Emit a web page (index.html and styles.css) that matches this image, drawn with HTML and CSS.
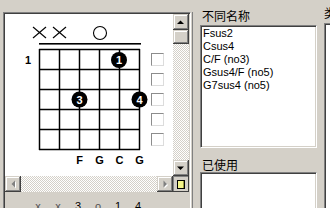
FILE: index.html
```html
<!DOCTYPE html>
<html>
<head>
<meta charset="utf-8">
<link rel="stylesheet" href="styles.css">
</head>
<body>
<div class="app">
  <div class="leftpane">
    <div class="scrollview">
      <div class="canvas">
        <svg class="chord" width="146" height="162" viewBox="0 0 146 162">
          <g stroke="#000" stroke-width="1.1" fill="none">
            <line x1="28" y1="13" x2="41" y2="24"/>
            <line x1="41" y1="13" x2="28" y2="24"/>
            <line x1="48" y1="13" x2="61" y2="24"/>
            <line x1="61" y1="13" x2="48" y2="24"/>
            <circle cx="95" cy="19" r="6.5"/>
          </g>
          <rect x="34" y="29" width="102" height="1.6" fill="#000"/>
          <g stroke="#000" stroke-width="1.5">
            <line x1="34.5" y1="35" x2="34.5" y2="136"/>
            <line x1="54.5" y1="35" x2="54.5" y2="136"/>
            <line x1="74.5" y1="35" x2="74.5" y2="136"/>
            <line x1="94.5" y1="35" x2="94.5" y2="136"/>
            <line x1="114.5" y1="35" x2="114.5" y2="136"/>
            <line x1="134.5" y1="35" x2="134.5" y2="136"/>
            <line x1="34" y1="35.5" x2="135" y2="35.5"/>
            <line x1="34" y1="55.5" x2="135" y2="55.5"/>
            <line x1="34" y1="75.5" x2="135" y2="75.5"/>
            <line x1="34" y1="95.5" x2="135" y2="95.5"/>
            <line x1="34" y1="115.5" x2="135" y2="115.5"/>
            <line x1="34" y1="135.5" x2="135" y2="135.5"/>
          </g>
          <text class="fret" x="23" y="50">1</text>
          <circle cx="114" cy="46" r="8" fill="#000"/>
          <text class="finger" x="114" y="50">1</text>
          <circle cx="74.5" cy="85.5" r="8" fill="#000"/>
          <text class="finger" x="74.5" y="89.5">3</text>
          <circle cx="134.5" cy="85.5" r="8" fill="#000"/>
          <text class="finger" x="134.5" y="89.5">4</text>
          <text class="note" x="74.5" y="150">F</text>
          <text class="note" x="94.5" y="150">G</text>
          <text class="note" x="114.5" y="150">C</text>
          <text class="note" x="134.5" y="150">G</text>
        </svg>
        <div class="checks">
          <span class="check"></span>
          <span class="check"></span>
          <span class="check"></span>
          <span class="check"></span>
          <span class="check"></span>
        </div>
      </div>
      <div class="vscroll">
        <span class="sbtn"><svg width="16" height="16"><polygon points="4,10 11,10 7.5,6.5" fill="#000"/></svg></span>
        <span class="thumb"></span>
        <span class="track"></span>
        <span class="sbtn"><svg width="16" height="16"><polygon points="4,6.5 11,6.5 7.5,10" fill="#000"/></svg></span>
      </div>
      <div class="hscroll">
        <span class="sbtn"><svg width="16" height="16"><polygon points="10,4.5 10,11.5 6.5,8" fill="#fff" transform="translate(1,1)"/><polygon points="10,4.5 10,11.5 6.5,8" fill="#808080"/></svg></span>
        <span class="track"></span>
        <span class="sbtn"><svg width="16" height="16"><polygon points="6.5,4.5 6.5,11.5 10,8" fill="#fff" transform="translate(1,1)"/><polygon points="6.5,4.5 6.5,11.5 10,8" fill="#808080"/></svg></span>
      </div>
      <div class="corner">
        <svg width="16" height="16"><rect x="4.5" y="4.5" width="7" height="8" fill="#f4f48a" stroke="#000"/><line x1="10.5" y1="5" x2="10.5" y2="12" stroke="#9a9a40"/></svg>
      </div>
    </div>
    <div class="numrow">
      <span class="num small">x</span>
      <span class="num small">x</span>
      <span class="num">3</span>
      <span class="num small">o</span>
      <span class="num">1</span>
      <span class="num">4</span>
    </div>
  </div>
  <div class="splitter"></div>
  <div class="rightcol">
    <div class="label first">不同名称</div>
    <div class="listbox list1">
      <div class="item">Fsus2</div>
      <div class="item">Csus4</div>
      <div class="item">C/F (no3)</div>
      <div class="item">Gsus4/F (no5)</div>
      <div class="item">G7sus4 (no5)</div>
    </div>
    <div class="label second">已使用</div>
    <div class="listbox list2"></div>
  </div>
  <div class="thirdcol">
    <div class="label third">类型</div>
    <div class="listbox list3"></div>
  </div>
</div>
</body>
</html>
```

FILE: styles.css
```css
html, body {
  margin: 0;
  padding: 0;
}
body {
  width: 330px;
  height: 208px;
  overflow: hidden;
  background: #d4d0c8;
  font-family: "Liberation Sans", "Noto Sans CJK SC", sans-serif;
  font-size: 11px;
  color: #000;
}
.app {
  display: flex;
  align-items: flex-start;
  width: 400px;
}
.leftpane {
  flex: none;
  margin-left: 3px;
  margin-top: 12px;
  width: 188px;
  height: 210px;
  box-sizing: border-box;
  border: 1px solid;
  border-color: #808080 #fff #fff #808080;
  box-shadow: inset 1px 1px #404040, inset -1px -1px #d4d0c8;
  padding: 1px;
}
.scrollview {
  display: grid;
  grid-template-columns: 168px 16px;
  grid-template-rows: 162px 16px;
}
.canvas {
  background: #fff;
  display: flex;
}
.chord {
  display: block;
  flex: none;
}
.chord text {
  font-family: "Liberation Sans", sans-serif;
  font-size: 11px;
  font-weight: bold;
  text-anchor: middle;
}
.chord .finger {
  fill: #fff;
  font-size: 11px;
}
.checks {
  display: flex;
  flex-direction: column;
  gap: 7px;
  padding-top: 39px;
}
.check {
  display: block;
  width: 13px;
  height: 13px;
  box-sizing: border-box;
  background: #fff;
  border: 1px solid;
  border-color: #8c8c8c #dcdcdc #dcdcdc #8c8c8c;
}
.vscroll {
  display: flex;
  flex-direction: column;
}
.hscroll {
  display: flex;
}
.sbtn, .thumb, .corner {
  display: block;
  width: 16px;
  height: 16px;
  flex: none;
  background: #d4d0c8;
  box-shadow: inset -1px -1px #404040, inset 1px 1px #d4d0c8, inset -2px -2px #808080, inset 2px 2px #fff;
}
.sbtn svg, .corner svg {
  display: block;
}
.thumb {
  height: 14px;
}
.track {
  flex: 1;
  background: repeating-conic-gradient(#d4d0c8 0 25%, #fff 0 50%) 0 0 / 2px 2px;
}
.corner {
  box-shadow: inset -1px -1px #404040, inset 1px 1px #808080, inset -2px -2px #d4d0c8;
}
.numrow {
  display: flex;
  padding-left: 23px;
  margin-top: 8px;
  line-height: 13px;
}
.num {
  width: 20px;
  text-align: center;
  color: #000;
}
.num.small {
  color: #555;
}
.splitter {
  flex: none;
  width: 1px;
  height: 200px;
  margin-top: 12px;
  margin-left: 1px;
  background: #808080;
}
.rightcol {
  flex: none;
  margin-left: 7px;
  width: 117px;
  display: flex;
  flex-direction: column;
}
.thirdcol {
  flex: none;
  margin-left: 7px;
  width: 60px;
  display: flex;
  flex-direction: column;
}
.label {
  font-family: "Noto Sans CJK SC", sans-serif;
  font-size: 12px;
  line-height: 14px;
  height: 14px;
  padding-left: 2px;
  white-space: nowrap;
}
.label.first {
  margin-top: 9px;
  margin-bottom: 2px;
}
.label.second {
  margin-top: 10px;
}
.label.third {
  margin-top: 6px;
  margin-bottom: 3px;
  padding-left: 0;
}
.listbox {
  box-sizing: border-box;
  background: #fff;
  border: 1px solid;
  border-color: #808080 #fff #fff #808080;
  box-shadow: inset 1px 1px #404040, inset -1px -1px #d4d0c8;
  padding: 1px 1px 1px 2px;
}
.list1 {
  height: 123px;
}
.list2 {
  height: 50px;
}
.list3 {
  height: 200px;
}
.item {
  line-height: 13px;
  white-space: nowrap;
}
```
